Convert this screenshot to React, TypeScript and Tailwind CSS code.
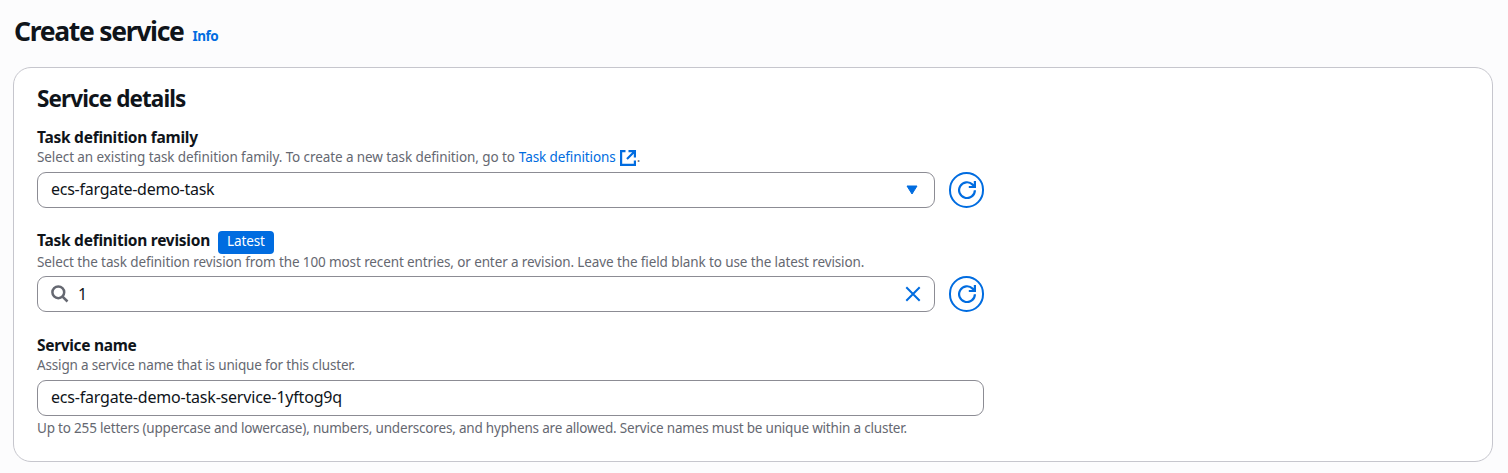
import type { ReactNode } from "react";

function RefreshIcon() {
  return (
    <svg className="mb-px" width="18" height="18" viewBox="0 0 18 18" fill="none" stroke="currentColor" strokeWidth="2.200">
      <path d="M16.900 9.200a7.900 7.900 0 1 1-2.300-5.600L16.800 5.800" />
      <path d="M10.800 6h6.100V0" />
    </svg>
  );
}

function RefreshButton({ label }: { label: string }) {
  return (
    <button
      aria-label={label}
      className="flex h-[36px] w-[35px] shrink-0 items-center justify-center rounded-full border-2 border-[#006ce0] bg-white text-[#006ce0]"
    >
      <RefreshIcon />
    </button>
  );
}

function Label({ children }: { children: ReactNode }) {
  return <div className="flex h-[22px] items-center font-bold text-[15.5px] tracking-[-0.26px] whitespace-nowrap">{children}</div>;
}

function Description({ children }: { children: ReactNode }) {
  return <div className="flex h-[19px] items-center text-[13.5px] whitespace-nowrap text-[#656871]">{children}</div>;
}

const control =
  "flex h-[36px] items-center rounded-[9px] border border-[#8c8c94] bg-white text-[16px] whitespace-nowrap";

export default function App() {
  return (
    <main className="h-[473px] overflow-hidden bg-[#fcfcfd] pl-[13px] pr-[15px] font-['Noto_Sans',sans-serif] text-[#0f141a]">
      <header className="flex h-[67px] items-baseline pt-[13px] whitespace-nowrap">
        <h1 className="pl-px text-[26.5px] leading-[36px] font-bold tracking-[-1.3px]">Create service</h1>
        <a className="ml-[9px] text-[13.5px] font-bold tracking-[-0.5px] text-[#006ce0]">Info</a>
      </header>
      <section className="h-[395px] rounded-[18px] border border-[#c6c6cd] bg-white pl-[23px]">
        <h2 className="pt-[17px] text-[22.5px] leading-[28px] font-bold tracking-[-0.9px]">Service details</h2>

        <div className="mt-[13px]">
          <Label><span className="pt-[2px]">Task definition family</span></Label>
          <Description>
            <span className="tracking-[-0.09px]">Select an existing task definition family. To create a new task definition, go to</span>
            <a className="ml-[4px] tracking-[-0.1px] text-[#006ce0]">Task definitions</a>
            <svg className="mr-px ml-[4px] text-[#006ce0]" width="16" height="16" viewBox="0 0 16 16" fill="none" stroke="currentColor" strokeWidth="2.200">
              <path d="M5.500 1.100H1.100v13.800h13.800V10.500" />
              <path d="M8.500 1.100h6.400v6.400M14.500 1.500L7 9" />
            </svg>
            <span>.</span>
          </Description>
          <div className="mt-[5px] flex gap-[14px]">
            <div className={`${control} w-[898px] justify-between pl-[13px] pr-[16px]`}>
              <span className="pb-[2px] tracking-[-0.26px]">ecs-fargate-demo-task</span>
              <svg width="12" height="10" viewBox="0 0 12 10" fill="#006ce0" stroke="#006ce0" strokeLinejoin="round">
                <path d="M1 1h10L6 9z" />
              </svg>
            </div>
            <RefreshButton label="Refresh families" />
          </div>
        </div>

        <div className="mt-[22px]">
          <Label>
            <span>Task definition revision</span>
            <span className="mt-[2px] ml-[8px] flex h-[23px] w-[56px] items-center justify-center rounded-[4px] bg-[#006ce0] pb-[2px] text-[13.5px] font-normal tracking-[-0.1px] text-white">
              Latest
            </span>
          </Label>
          <Description>
            <span className="pt-[2px] tracking-[-0.11px]">Select the task definition revision from the 100 most recent entries, or enter a revision. Leave the field blank to use the latest revision.</span>
          </Description>
          <div className="mt-[5px] flex gap-[14px]">
            <div className={`${control} w-[898px] pl-[13px] pr-[13px]`}>
              <svg width="18" height="18" viewBox="0 0 18 18" fill="none" stroke="#656871" strokeWidth="2.500">
                <circle cx="7.300" cy="7.300" r="5.900" />
                <path d="M11.300 11.300L16.500 16.500" />
              </svg>
              <span className="ml-[9px] flex-1">1</span>
              <svg width="16" height="16" viewBox="0 0 16 16" fill="none" stroke="#006ce0" strokeWidth="2">
                <path d="M1.300 1.300l13.400 13.400M14.700 1.300L1.300 14.700" />
              </svg>
            </div>
            <RefreshButton label="Refresh revisions" />
          </div>
        </div>

        <div className="mt-[22px]">
          <Label><span className="pt-[2px] tracking-[-0.32px]">Service name</span></Label>
          <Description><span className="tracking-[-0.165px]">Assign a service name that is unique for this cluster.</span></Description>
          <div className={`${control} mt-[5px] w-[947px] pl-[13px]`}>
            <span className="pb-[2px] tracking-[-0.2px]">ecs-fargate-demo-task-service-1yftog9q</span>
          </div>
          <div className="mt-[3px]">
            <Description>
              <span className="tracking-[-0.19px]">Up to 255 letters (uppercase and lowercase), numbers, underscores, and hyphens are allowed. Service names must be unique within a cluster.</span>
            </Description>
          </div>
        </div>
      </section>
    </main>
  );
}
